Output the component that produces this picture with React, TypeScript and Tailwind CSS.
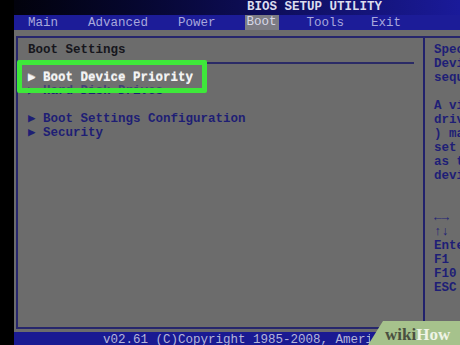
const menu = [
  { label: 'Main', ml: 'ml-[14px]', active: false },
  { label: 'Advanced', ml: 'ml-[30px]', active: false },
  { label: 'Power', ml: 'ml-[30px]', active: false },
  { label: 'Boot', ml: 'ml-[29px]', active: true },
  { label: 'Tools', ml: 'ml-[28px]', active: false },
  { label: 'Exit', ml: 'ml-[27px]', active: false },
];

const help = [
  'Specifies the Boot',
  'Device Priority',
  'sequence.',
  '',
  'A virtual floppy',
  'drive (Floppy Drive B:',
  ') may appear when you',
  'set the CD-ROM drive',
  'as the first boot',
  'device.',
  '',
  '',
  '\u2190\u2192   Select Screen',
  '\u2191\u2193   Select Item',
  'Enter Go to Sub Screen',
  'F1    General Help',
  'F10   Save and Exit',
  'ESC   Exit',
];

export default function App() {
  return (
    <div
      className="relative w-[460px] h-[345px] overflow-hidden bg-black flex text-[12.5px] leading-[14px] font-bold"
      style={{ fontFamily: '"Liberation Mono", "DejaVu Sans Mono", monospace' }}
    >
      <div className="w-[14px] shrink-0 bg-black" />

      <div className="flex-1 min-w-0 flex flex-col">
        {/* title */}
        <div className="h-[15px] shrink-0 bg-gradient-to-r from-[#02020c] via-[#0c0c50] to-[#1a1a9a] text-[#dcdcee] whitespace-nowrap">
          <span className="ml-[233px] leading-[15px]">BIOS SETUP UTILITY</span>
        </div>

        {/* menu */}
        <div className="h-[15px] shrink-0 bg-[#1c1c98] flex items-center whitespace-nowrap text-[#a8a8dc] font-normal">
          {menu.map((m) => (
            <span
              key={m.label}
              className={`${m.ml} ${m.active ? 'bg-[#7c7c84] text-[#d8d8e8] px-[2px] h-[15px] leading-[15px]' : ''}`}
            >
              {m.label}
            </span>
          ))}
        </div>

        {/* body */}
        <div className="flex-1 min-h-0 bg-[#6c6c6c] pt-[6px] pl-[2px] pb-[3px]">
          <div className="h-full w-[470px] border-l-2 border-t-2 border-b-2 border-[#26266c] flex">
            <div className="w-[405px] shrink-0 flex flex-col">
              <div className="pt-[5px] pl-[10px] text-[#16161c]">Boot Settings</div>
              <div className="mt-[5px] mr-[9px] h-[2px] bg-[#2a2a66]" />
              <div className="mt-[6px] pl-[10px] text-[#1e1e74] whitespace-pre">
                <div className="text-[#f2f2f2]">{'\u25B6 Boot Device Priority'}</div>
                <div>{'\u25B6 Hard Disk Drives'}</div>
                <div className="h-[14px]" />
                <div>{'\u25B6 Boot Settings Configuration'}</div>
                <div>{'\u25B6 Security'}</div>
              </div>
            </div>
            <div className="w-[2px] shrink-0 bg-[#22226c]" />
            <div className="pl-[9px] pt-[5px] text-[#1e1e76] whitespace-pre">
              {help.map((h, i) => (
                <div key={i} className="h-[14px]">
                  {h}
                </div>
              ))}
            </div>
          </div>
        </div>

        {/* footer */}
        <div className="h-[13px] shrink-0 bg-[#1a1a92] text-[#b4b4d8] font-normal whitespace-nowrap">
          <div className="ml-[89px] w-[267px] overflow-hidden leading-[16px]">
            v02.61 (C)Copyright 1985-2008, American Megatrends, Inc.
          </div>
        </div>
      </div>

      {/* green highlight */}
      <div className="absolute left-[17px] top-[60px] w-[190px] h-[33px] border-[5px] border-[#3ee83a] bg-[#787878]/40 rounded-[2px]" />
      <div className="absolute left-[28px] top-[71px] text-[#f4f4f4] whitespace-pre leading-[14px]">
        {'\u25B6 Boot Device Priority'}
      </div>

      {/* wikiHow badge */}
      <svg className="absolute left-[368px] top-[321px]" width="92" height="24" viewBox="0 0 92 24">
        <polygon points="0,24 15,0 92,0 92,24" fill="#a6c28c" />
      </svg>
      <div
        className="absolute left-[385px] top-[325px] text-[17px] leading-[19px] font-bold"
        style={{ fontFamily: '"Liberation Serif", "DejaVu Serif", serif' }}
      >
        <span className="text-[#4a5040]">wiki</span>
        <span className="text-[#eef4e6]">How</span>
      </div>
    </div>
  );
}
